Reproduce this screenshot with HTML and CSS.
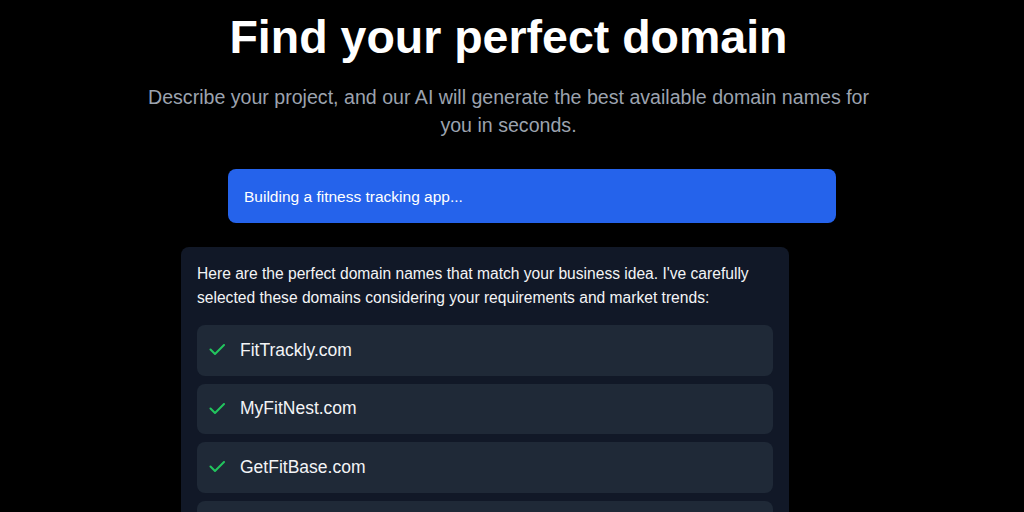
FILE: index.html
```html
<!DOCTYPE html>
<html lang="en">
<head>
<meta charset="utf-8">
<title>Find your perfect domain</title>
<link rel="stylesheet" href="styles.css">
</head>
<body>
<main class="page">
  <header class="hero">
    <h1 class="title">Find your perfect domain</h1>
    <p class="subtitle">Describe your project, and our AI will generate the best available domain names for you in seconds.</p>
  </header>
  <section class="chat">
    <div class="user-msg">Building a fitness tracking app...</div>
    <div class="bot-msg">
      <p class="bot-text">Here are the perfect domain names that match your business idea. I've carefully selected these domains considering your requirements and market trends:</p>
      <ul class="domains">
        <li class="domain">
          <svg class="check" viewBox="0 0 16 12" width="16" height="12"><path d="M1.5 5.5l4.5 4.5L15 1" fill="none" stroke="#22c55e" stroke-width="2" stroke-linecap="round" stroke-linejoin="round"/></svg>
          <span class="domain-name">FitTrackly.com</span>
        </li>
        <li class="domain">
          <svg class="check" viewBox="0 0 16 12" width="16" height="12"><path d="M1.5 5.5l4.5 4.5L15 1" fill="none" stroke="#22c55e" stroke-width="2" stroke-linecap="round" stroke-linejoin="round"/></svg>
          <span class="domain-name">MyFitNest.com</span>
        </li>
        <li class="domain">
          <svg class="check" viewBox="0 0 16 12" width="16" height="12"><path d="M1.5 5.5l4.5 4.5L15 1" fill="none" stroke="#22c55e" stroke-width="2" stroke-linecap="round" stroke-linejoin="round"/></svg>
          <span class="domain-name">GetFitBase.com</span>
        </li>
        <li class="domain">
          <svg class="check" viewBox="0 0 16 12" width="16" height="12"><path d="M1.5 5.5l4.5 4.5L15 1" fill="none" stroke="#22c55e" stroke-width="2" stroke-linecap="round" stroke-linejoin="round"/></svg>
          <span class="domain-name">FitPulseHub.com</span>
        </li>
      </ul>
    </div>
  </section>
</main>
</body>
</html>
```
FILE: styles.css
```css
* { box-sizing: border-box; }
html, body {
  margin: 0;
  padding: 0;
  background: #000;
  height: 100%;
  overflow: hidden;
}
body {
  font-family: "Liberation Sans", Arial, sans-serif;
  color: #fff;
}
.page {
  width: 1017px;
  display: flex;
  flex-direction: column;
  align-items: center;
}
.hero {
  width: 740px;
  text-align: center;
}
.title {
  margin: 13px 0 0;
  font-size: 46.5px;
  line-height: 48px;
  font-weight: 700;
  color: #fff;
}
.subtitle {
  margin: 22px auto 0;
  font-size: 19.6px;
  line-height: 28px;
  color: #9ca3af;
}
.chat {
  width: 655px;
  margin-top: 30px;
  display: flex;
  flex-direction: column;
  gap: 24px;
}
.user-msg {
  align-self: flex-end;
  width: 608px;
  height: 54px;
  padding: 0 16px;
  display: flex;
  align-items: center;
  background: #2563eb;
  border-radius: 8px;
  font-size: 15.5px;
  line-height: 23px;
  color: #fff;
}
.bot-msg {
  align-self: flex-start;
  width: 608px;
  background: #111827;
  border-radius: 8px;
  padding: 15px 16px 16px;
}
.bot-text {
  margin: 0;
  font-size: 15.6px;
  line-height: 24px;
  color: #f3f4f6;
}
.domains {
  list-style: none;
  margin: 15px 0 0;
  padding: 0;
  display: flex;
  flex-direction: column;
  gap: 8px;
}
.domain {
  height: 50.5px;
  padding: 0 12px;
  display: flex;
  align-items: center;
  gap: 15px;
  background: #1f2937;
  border-radius: 8px;
}
.check { flex: none; }
.domain-name {
  font-size: 17.5px;
  line-height: 27px;
  color: #f3f4f6;
}
```
